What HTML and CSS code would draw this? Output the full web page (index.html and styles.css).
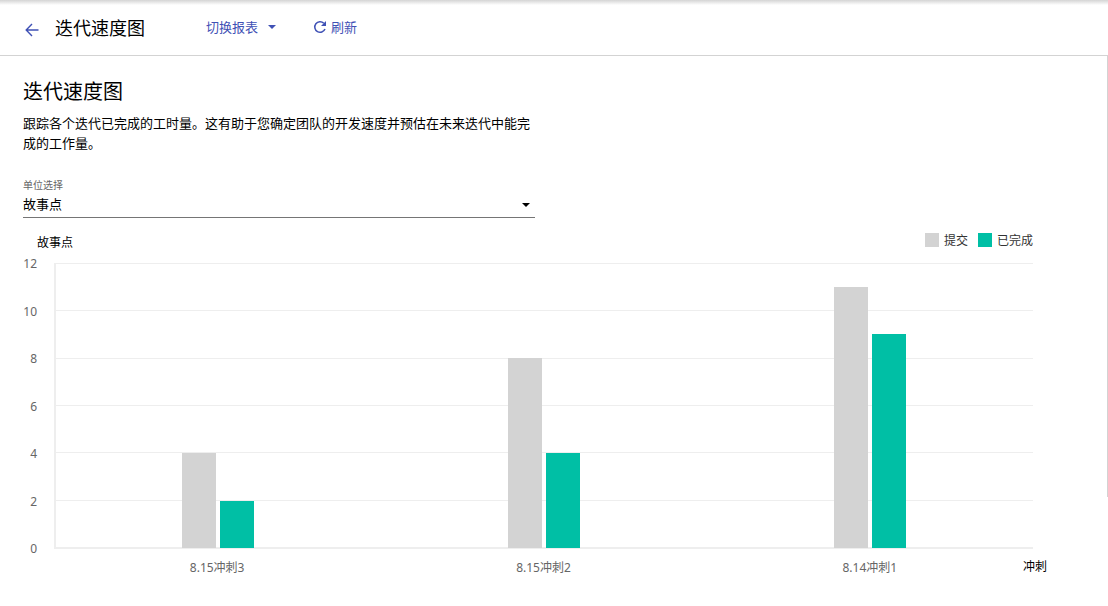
FILE: index.html
```html
<!DOCTYPE html>
<html lang="zh-CN">
<head>
<meta charset="utf-8">
<meta name="viewport" content="width=device-width, initial-scale=1">
<title>迭代速度图</title>
<link rel="stylesheet" href="styles.css">
</head>
<body>
<header class="topbar">
  <a class="back" href="#" aria-label="返回">
    <svg width="14" height="14" viewBox="0 0 14 14" fill="none" stroke="currentColor" stroke-width="1.4"><path d="M13.5 7H1.5M7 1L1.2 7L7 13"/></svg>
  </a>
  <h1 class="topbar-title">迭代速度图</h1>
  <button class="action switch" type="button">切换报表
    <svg width="8" height="4" viewBox="0 0 8 4" fill="currentColor"><path d="M0 0h8L4 4z"/></svg>
  </button>
  <button class="action refresh" type="button">
    <svg width="14" height="14" viewBox="0 0 14 14" fill="none"><path d="M12 9A5.3 5.3 0 1 1 10.8 3.2" stroke="currentColor" stroke-width="1.5"/><path d="M13 1V6H8z" fill="currentColor"/></svg>
    刷新</button>
</header>
<main class="content">
  <h2 class="title">迭代速度图</h2>
  <p class="description">跟踪各个迭代已完成的工时量。这有助于您确定团队的开发速度并预估在未来迭代中能完成的工作量。</p>
  <div class="field">
    <label class="field-label" for="unit">单位选择</label>
    <div class="field-box">
      <select class="field-select" id="unit"><option>故事点</option></select>
      <svg class="field-arrow" width="8" height="4" viewBox="0 0 8 4"><path d="M0 0h8L4 4z"/></svg>
    </div>
  </div>
  <section class="chart" aria-label="迭代速度图">
    <div class="chart-head">
      <span class="unit">故事点</span>
      <ul class="legend">
        <li class="legend-item"><span class="swatch committed"></span>提交</li>
        <li class="legend-item"><span class="swatch done"></span>已完成</li>
      </ul>
    </div>
    <div class="scale">
      <span>12</span><span>10</span><span>8</span><span>6</span><span>4</span><span>2</span><span>0</span>
    </div>
    <div class="lines"><i></i><i></i><i></i><i></i><i></i><i></i></div>
    <div class="bars">
      <div class="group"><div class="bar committed" style="height:33.333%"></div><div class="bar done" style="height:16.667%"></div></div>
      <div class="group"><div class="bar committed" style="height:66.667%"></div><div class="bar done" style="height:33.333%"></div></div>
      <div class="group"><div class="bar committed" style="height:91.667%"></div><div class="bar done" style="height:75%"></div></div>
    </div>
    <div class="names"><span>8.15冲刺3</span><span>8.15冲刺2</span><span>8.14冲刺1</span></div>
    <span class="axis-name">冲刺</span>
  </section>
</main>
</body>
</html>
```
FILE: styles.css
```css
* {
  box-sizing: border-box;
}

body {
  margin: 0;
  background: #fff;
  color: #000;
  font: 13px/20px "Noto Sans", "Noto Sans CJK SC", sans-serif;
}

.topbar {
  display: flex;
  align-items: center;
  height: 56px;
  padding: 0 24px;
  border-bottom: 1px solid #d3d3d3;
  background: linear-gradient(#d4d4d4, #fff 5px);
}

.back {
  display: flex;
  margin: 4px 16px 0 1px;
  color: #3f51b5;
}

.topbar-title {
  margin: 0;
  font-size: 18px;
  font-weight: 400;
  line-height: 24px;
}

.action {
  display: flex;
  align-items: center;
  padding: 0 0 2px;
  border: 0;
  background: none;
  color: #3f51b5;
  font: inherit;
}

.switch {
  gap: 10px;
  margin-left: 61px;
}

.refresh {
  gap: 4px;
  margin-left: 37px;
}

.content {
  padding: 21px 23px;
  background: linear-gradient(#d3d3d3, #d3d3d3) right top / 1px 441px no-repeat;
}

.title {
  margin: 0 0 6px;
  font-size: 20px;
  font-weight: 400;
  line-height: 30px;
}

.description {
  max-width: 512px;
  margin: 0 0 24px;
}

.field {
  max-width: 512px;
}

.field-label {
  display: block;
  color: #666;
  font-size: 10px;
  line-height: 16px;
}

.field-box {
  display: flex;
  align-items: center;
  height: 25px;
  border-bottom: 1px solid #757575;
}

.field-select {
  flex: 1;
  height: 24px;
  padding: 0 0 2px;
  border: 0;
  outline: 0;
  appearance: none;
  background: none;
  color: #000;
  font: inherit;
}

.field-arrow {
  margin-right: 5px;
}

.chart {
  display: grid;
  grid-template-columns: 31px 1fr;
  grid-template-rows: 45px 286px 38px;
  margin-right: 52px;
  color: #666;
  font-size: 12px;
  line-height: 16px;
}

.chart-head {
  display: flex;
  grid-column: 1 / 3;
  justify-content: space-between;
  padding: 15px 0 0 14px;
}

.unit {
  padding-top: 2px;
  color: #000;
}

.legend {
  display: flex;
  gap: 10px;
  margin: 0;
  padding: 0;
  color: #333;
  list-style: none;
}

.legend-item {
  display: flex;
  gap: 5px;
}

.swatch {
  width: 14px;
  height: 14px;
}

.committed {
  background: #d3d3d3;
}

.done {
  background: #00bfa5;
}

.scale {
  display: flex;
  flex-direction: column;
  grid-area: 2 / 1;
  justify-content: space-between;
  margin: -7px 0 -8px;
  padding-right: 17px;
  text-align: right;
}

.lines {
  display: grid;
  grid-area: 2 / 2;
  grid-template-rows: repeat(6, 1fr);
  border: solid #eee;
  border-width: 0 0 2px 2px;
}

.lines i {
  border-top: 1px solid #eee;
}

.bars {
  display: grid;
  grid-area: 2 / 2;
  grid-template-columns: repeat(3, 1fr);
  padding: 0 0 1px 1px;
}

.group {
  display: flex;
  align-items: flex-end;
  justify-content: center;
  gap: 4px;
}

.bar {
  width: 34px;
}

.names {
  display: grid;
  grid-area: 3 / 2;
  grid-template-columns: repeat(3, 1fr);
  padding-top: 11px;
  text-align: center;
}

.axis-name {
  grid-area: 3 / 2;
  justify-self: end;
  margin: 10px -14px 0 0;
  color: #000;
}
```
